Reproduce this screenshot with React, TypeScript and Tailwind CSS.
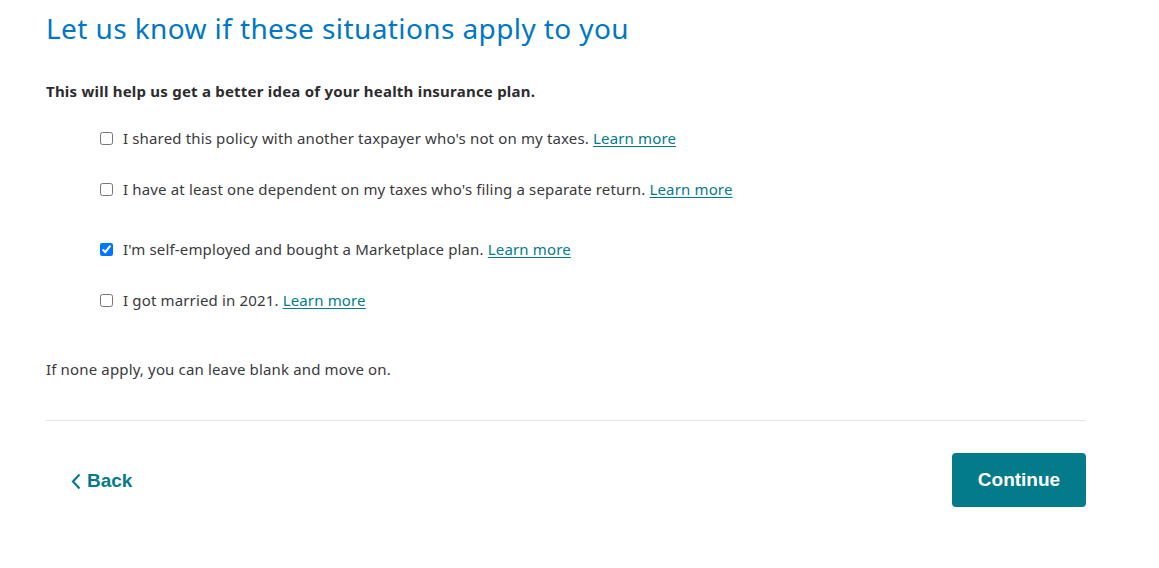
const options = [
    { text: "I shared this policy with another taxpayer who's not on my taxes.", checked: false, mt: 'mt-[26px]' },
    { text: "I have at least one dependent on my taxes who's filing a separate return.", checked: false, mt: 'mt-[29px]' },
    { text: "I'm self-employed and bought a Marketplace plan.", checked: true, mt: 'mt-[38px]' },
    { text: 'I got married in 2021.', checked: false, mt: 'mt-[29px]' },
];

const App = () => {
    return (
        <div className="min-h-screen bg-white font-['Noto_Sans',sans-serif] text-[#393a3d]">
            <div className="w-[1040px] ml-[46px] pt-[9px]">
                <h1 className="text-[28px] leading-[38px] font-normal text-[#0077c5] tracking-[0.4px]">
                    Let us know if these situations apply to you
                </h1>

                <p className="mt-[34px] text-[15px] leading-[20px] font-bold text-[#2c2c2e] tracking-[0.22px]">
                    This will help us get a better idea of your health insurance plan.
                </p>

                <div className="pl-[54px]">
                    {options.map((opt, i) => (
                        <label key={i} className={`${opt.mt} flex items-center gap-[10px] text-[15px] leading-[22px] tracking-[0.15px]`}>
                            <input
                                type="checkbox"
                                defaultChecked={opt.checked}
                                className="w-[13px] h-[13px] m-0 accent-[#0075ff]"
                            />
                            <span>
                                {opt.text}{' '}
                                <a href="#" className="text-[#047b8a] underline underline-offset-2">Learn more</a>
                            </span>
                        </label>
                    ))}
                </div>

                <p className="mt-[47px] text-[15px] leading-[22px] tracking-[0.15px]">
                    If none apply, you can leave blank and move on.
                </p>

                <div className="mt-[40px] border-t border-[#e6e6e6]" />

                <div className="mt-[32px] flex items-center justify-between">
                    <button className="ml-[25px] mt-[2px] flex items-center gap-[6px] text-[#047b8a] font-['Liberation_Sans',Arial,sans-serif] font-bold text-[19px]">
                        <svg width="10" height="17" viewBox="0 0 10 17" fill="none">
                            <polyline points="8.5,1.5 2,8.5 8.5,15.5" stroke="currentColor" strokeWidth="2.2" />
                        </svg>
                        Back
                    </button>
                    <button className="w-[134px] h-[54px] rounded-[4px] bg-[#047b8a] text-white font-['Liberation_Sans',Arial,sans-serif] font-bold text-[19px]">
                        Continue
                    </button>
                </div>
            </div>
        </div>
    );
};

export default App;
